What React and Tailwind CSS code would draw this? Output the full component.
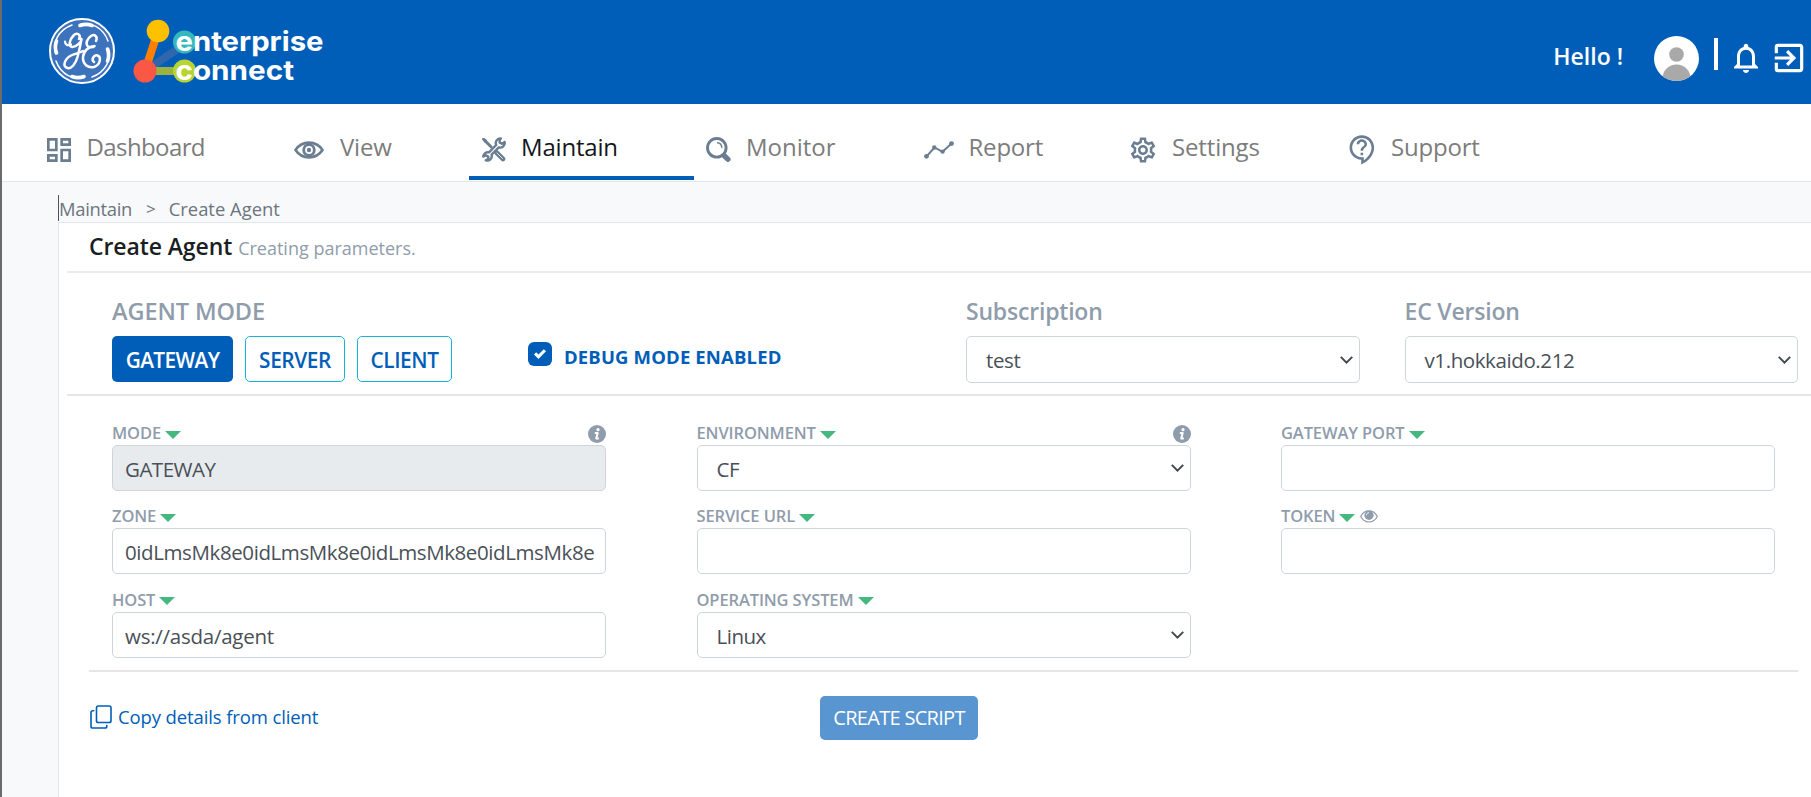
import React from "react";
import {
  MdOutlineDashboard,
  MdOutlineSettings,
  MdOutlineContactSupport,
  MdExitToApp,
  MdNotificationsNone,
} from "react-icons/md";

function GeLogo() {
  return (
    <svg width="68" height="68" viewBox="0 0 68 68" fill="none" stroke="#fff" strokeLinecap="round" strokeLinejoin="round">
      <circle cx="34" cy="34" r="32" fill="#3d73bd" strokeWidth="2" />
      <path d="M32 7.500C42 4.500 55 10 60 24M60.500 32C63.500 42 58 55 44 60M36 60.500C26 63.500 13 58 8 44M7.500 36C4.500 26 10 13 24 8" strokeWidth="1.500" />
      <path d="M32 8.500C36 7 40 7 44 8.500M59.500 32C61 36 61 40 59.500 44M36 59.500C32 61 28 61 24 59.500M8.500 36C7 32 7 28 8.500 24" strokeWidth="3.600" />
      <path d="M31 22C33.500 17.500 29 15 25.500 18.500C21 23 20.500 29.500 24 30C28.500 30.500 34 24 33.500 22C32.500 27 31.500 33 29.500 40C27.500 47 23.500 52 19.500 51C14 49.500 16.500 42 23 38.500C28 36 32 36 35 34" strokeWidth="2.500" />
      <path d="M17 24.500C17 28 20 29 23 27.500" strokeWidth="2.200" />
      <path d="M48 24C50 20 47 16.500 43 19C39 21.500 37.500 26.500 39.500 29C41 31 45 30.500 46.500 29C41 29.500 35.500 33.500 35 40C34.500 47 40 51.500 46 50C52.500 48 53.500 40 49.500 38.500C45.500 37.500 43 43 46 45" strokeWidth="2.500" />
    </svg>
  );
}

function ConnectLogo() {
  return (
    <svg width="196" height="74" viewBox="0 0 196 74">
      <path d="M15 54L58 25" stroke="#2f66ac" strokeWidth="8" />
      <path d="M15 54L28 14" stroke="#ff8000" strokeWidth="8" />
      <path d="M15 54H54" stroke="#9cb23f" strokeWidth="8" />
      <circle cx="28" cy="14" r="11.300" fill="#ffc000" />
      <circle cx="15" cy="54" r="11.500" fill="#fa5745" />
      <circle cx="54.500" cy="25" r="11.500" fill="#35b8bd" />
      <circle cx="54.500" cy="54" r="11.500" fill="#b8d432" />
      <g fill="#fff" fontFamily="Inter, sans-serif" fontWeight="700" fontSize="27.500">
        <text x="45.500" y="33.500" textLength="148" lengthAdjust="spacingAndGlyphs">enterprise</text>
        <text x="45.500" y="62.800" textLength="118.500" lengthAdjust="spacingAndGlyphs">connect</text>
      </g>
    </svg>
  );
}

function EyeIcon() {
  return (
    <svg width="30" height="18" viewBox="0 0 30 18" fill="none" stroke="#6b7d91">
      <path d="M1.500 9C8 -0.800 22 -0.800 28.500 9C22 18.800 8 18.800 1.500 9Z" strokeWidth="2.600" />
      <circle cx="15" cy="9" r="5.300" strokeWidth="2.800" />
      <circle cx="15" cy="9" r="2.200" fill="#6b7d91" stroke="none" />
    </svg>
  );
}

function ToolsIcon() {
  return (
    <svg width="24" height="25" viewBox="0 0 24 25" fill="none" strokeLinecap="round" strokeLinejoin="round">
      <path d="M1.800 2.500L9 9.800" stroke="#6b7d91" strokeWidth="3" />
      <path d="M1 1.500L4.500 3L3 5Z" fill="#6b7d91" stroke="#6b7d91" />
      <path d="M14.500 15.500L21 22" stroke="#6b7d91" strokeWidth="4.600" />
      <path d="M15 16L20.500 21.500" stroke="#fff" strokeWidth="0.800" />
      <path d="M18.800 1.500A4.600 4.600 0 0 0 14.200 8L7 15.400A4.600 4.600 0 0 0 1.200 19.600L3.800 18.300L6.300 19.500L6.100 22L3.800 23.400A4.600 4.600 0 0 0 9.600 17.700L16.800 10.400A4.600 4.600 0 0 0 22.600 5L20 6.700L17.600 5.600L17.700 3.200Z" fill="#fff" stroke="#6b7d91" strokeWidth="2.400" />
    </svg>
  );
}

function MagnifierIcon() {
  return (
    <svg width="25" height="25" viewBox="0 0 25 25" fill="none" stroke="#6b7d91" strokeLinecap="round">
      <circle cx="10.800" cy="10.800" r="9.300" strokeWidth="2.900" />
      <path d="M11.500 5.800C14 6 15.600 8 15.800 10.500" strokeWidth="1.400" />
      <path d="M18.500 19L22 22.300" strokeWidth="5.200" />
    </svg>
  );
}

function TimelineIcon() {
  return (
    <svg width="30" height="18" viewBox="0 0 30 18" fill="#6b7d91">
      <path d="M2.500 15.500L10.500 6.500L18.500 10.800L27.500 2.500" fill="none" stroke="#6b7d91" strokeWidth="1.900" />
      <circle cx="2.500" cy="15.300" r="2.400" />
      <circle cx="10.300" cy="6.500" r="2.200" />
      <circle cx="18.600" cy="10.600" r="2.200" />
      <circle cx="27.500" cy="2.600" r="2.400" />
    </svg>
  );
}

function SmallEye() {
  return (
    <svg width="18" height="13" viewBox="0 0 18 13" fill="none" stroke="#8f9cab" className="ml-[1px]">
      <path d="M0.700 6.500C4.500 -1 13.500 -1 17.300 6.500C13.500 13.800 4.500 13.800 0.700 6.500Z" strokeWidth="1.200" />
      <circle cx="9" cy="5.300" r="4.600" fill="#8f9cab" stroke="none" />
      <path d="M6.400 5.300C6.400 3.800 7.500 2.700 9 2.700" stroke="#fff" strokeWidth="0.900" />
    </svg>
  );
}

function InfoIcon() {
  return (
    <svg width="18" height="18" viewBox="0 0 18 18">
      <circle cx="9" cy="9" r="9" fill="#8f9cab" />
      <circle cx="10" cy="4.700" r="1.600" fill="#fff" />
      <path d="M6.800 8H9.700L8.200 13.600H10.800" fill="none" stroke="#fff" strokeWidth="2" strokeLinejoin="round" />
    </svg>
  );
}

function CopyIcon() {
  return (
    <svg width="22" height="24" viewBox="0 0 22 24" fill="none" stroke="#005eb8" strokeWidth="1.600" strokeLinecap="round">
      <rect x="6.500" y="1" width="14.500" height="16.500" rx="1.800" />
      <path d="M3.700 5.800H2.800Q1 5.800 1 7.600V21.200Q1 23 2.800 23H15Q16.800 23 16.800 21.200V20.500" />
    </svg>
  );
}

function Chevron() {
  return (
    <svg width="13" height="8" viewBox="0 0 13 8" fill="none" stroke="#43484d" strokeWidth="2">
      <path d="M0.800 0.900L6.500 6.600L12.200 0.900" />
    </svg>
  );
}

function Triangle() {
  return (
    <svg width="16" height="8" viewBox="0 0 16 8" className="mt-[3px]">
      <path d="M0 0H16L8 8Z" fill="#45b880" />
    </svg>
  );
}

const navItems = [
  { label: "Dashboard", icon: <MdOutlineDashboard className="h-[32px] w-[32px] -ml-[4px]" />, box: "w-[248px] pl-[44.500px]", text: "ml-[12px] tracking-[-0.6px]" },
  { label: "View", icon: <EyeIcon />, box: "w-[219px] pl-[44px]", text: "ml-[16px] tracking-[-0.2px]" },
  { label: "Maintain", icon: <ToolsIcon />, box: "w-[225px] border-b-4 border-[#005eb8] pl-[13px]", text: "ml-[15px] tracking-[-0.2px]", active: true },
  { label: "Monitor", icon: <MagnifierIcon />, box: "w-[186px] pl-[12px]", text: "ml-[15px]" },
  { label: "Report", icon: <TimelineIcon />, box: "w-[220px] pl-[44px]", text: "ml-[14.500px] tracking-[-0.2px]" },
  { label: "Settings", icon: <MdOutlineSettings className="h-[30px] w-[30px] -ml-[3px]" />, box: "w-[218px] pl-[31px]", text: "ml-[14px] tracking-[-0.150px]" },
  { label: "Support", icon: <MdOutlineContactSupport className="h-[31px] w-[31px] -ml-[4px] -mt-[1px]" />, box: "w-[200px] pl-[33px]", text: "ml-[13px] tracking-[-0.200px]" },
];

function NavItem({ item }) {
  return (
    <div className={"flex h-[76px] shrink-0 items-center " + (item.active ? "pt-[19px] " : "pt-[19px] pb-1 ") + item.box}>
      <span className="text-[#6b7d91]">{item.icon}</span>
      <span className={"-mt-[5px] text-[24px] leading-[32px] " + (item.active ? "font-medium text-[#14171a] " : "text-[#7c7c7c] ") + item.text}>{item.label}</span>
    </div>
  );
}

function Field({ label, value = "", select, info, eye, disabled, spacing = "tracking-[-0.5px]" }) {
  return (
    <div className="h-[83.400px] w-[494px]">
      <div className="flex h-[24px] items-center gap-[4px]">
        <span className="text-[16.500px] font-semibold leading-[24px] tracking-[-0.120px] text-[#8f9cab]">{label}</span>
        <Triangle />
        {eye && <SmallEye />}
        {info && <span className="ml-auto mt-[2px]"><InfoIcon /></span>}
      </div>
      <div className={"flex h-[46px] items-center justify-between rounded-[5px] border border-[#ced4da] pr-[6px] text-[20.500px] leading-[28px] text-[#495057] " + (select ? "pl-[19px] " : "pl-[12px] ") + (disabled ? "bg-[#e7ebee]" : "bg-white")}>
        <span className={"mt-[2px] whitespace-nowrap " + spacing}>{value}</span>
        {select && <Chevron />}
      </div>
    </div>
  );
}

function TopSelect({ label, value }) {
  return (
    <div className="w-[393.500px]">
      <div className="h-[40px] text-[23px] font-semibold leading-[30px] tracking-[-0.2px] text-[#8f9cab]">{label}</div>
      <div className="flex h-[47px] items-center justify-between rounded-[5px] border border-[#ced4da] pl-[19px] pr-[6px] text-[20.500px] leading-[28px] tracking-[-0.4px] text-[#495057]">
        <span className="mt-[1px]">{value}</span>
        <Chevron />
      </div>
    </div>
  );
}

export default function App() {
  return (
    <div className="flex h-[797px] w-full flex-col overflow-hidden border-l-2 border-[#6b6b6b] bg-[#f8f9fb] font-['Open_Sans','Noto_Sans',sans-serif]">
      <header className="flex h-[104px] shrink-0 items-start bg-[#005eb8] text-white">
        <div className="ml-[45.500px] mt-[17px]"><GeLogo /></div>
        <div className="ml-[14.500px] mt-[17px]"><ConnectLogo /></div>
        <div className="ml-auto flex pr-[3px]">
          <span className="mt-[39.500px] text-[23px] font-semibold leading-[32px]">Hello !</span>
          <svg width="45" height="45" viewBox="0 0 45 45" className="ml-[31px] mt-[36px]">
            <clipPath id="avatar"><circle cx="22.500" cy="22.500" r="22.500" /></clipPath>
            <g clipPath="url(#avatar)">
              <rect width="45" height="45" fill="#fff" />
              <circle cx="22.500" cy="18.500" r="7.300" fill="#a9a9a9" />
              <circle cx="22.500" cy="42.500" r="14" fill="#a9a9a9" />
            </g>
          </svg>
          <span className="ml-[15px] mt-[38px] h-[32px] w-[4px] bg-white" />
          <MdNotificationsNone className="ml-[10px] mt-[40px] h-[36px] w-[36px]" />
          <MdExitToApp className="ml-[6px] mt-[39px] h-[38px] w-[38px]" />
        </div>
      </header>

      <nav className="flex h-[78px] shrink-0 border-b border-[#e4e7ea] bg-white">
        {navItems.map((item) => <NavItem key={item.label} item={item} />)}
      </nav>

      <div className="ml-[56px] flex h-[40px] shrink-0 items-start pt-[13px] text-[18.400px] leading-[28px] text-[#6c757d]">
        <span className="h-[26px] border-l border-[#4b5563] tracking-[-0.3px]">Maintain</span>
        <span className="ml-[14px] text-[17px]">&gt;</span>
        <span className="ml-[13px]">Create Agent</span>
      </div>

      <main className="ml-[56px] flex-1 border-l border-t border-[#e4e7ea] bg-white">
        <div className="ml-[8px] flex h-[50px] items-baseline border-b-2 border-[#e9ebed] pl-[22px] pt-[6px]">
          <h1 className="text-[23px] font-semibold leading-[34px] tracking-[-0.100px] text-[#1b1e22]">Create Agent</h1>
          <span className="ml-[6px] text-[18px] text-[#8f9cab]">Creating parameters.</span>
        </div>

        <section className="ml-[8px] flex h-[123px] border-b-2 border-[#e4e6e8] pl-[45px] pt-[23px]">
          <div className="w-[416px]">
            <div className="h-[40px] text-[23.500px] font-semibold leading-[30px] tracking-[-0.100px] text-[#8f9cab]">AGENT MODE</div>
            <div className="flex gap-[12px] text-[20.800px] leading-[28px] tracking-[-0.4px]">
              <button className="h-[46px] w-[121px] rounded-[5px] bg-[#005eb8] pt-[2px] font-semibold tracking-[-0.6px] text-white">GATEWAY</button>
              <button className="h-[46px] w-[100px] rounded-[5px] border border-[#17b1de] pt-[1px] font-semibold text-[#005eb8]">SERVER</button>
              <button className="h-[46px] w-[95px] rounded-[5px] border border-[#17b1de] pt-[1px] font-semibold text-[#005eb8]">CLIENT</button>
            </div>
          </div>
          <div className="flex w-[438px] pt-[46px]">
            <span className="flex h-[24px] w-[24px] items-center justify-center rounded-[6px] bg-[#005eb8]">
              <svg width="12" height="12" viewBox="0 0 8 8"><path fill="#fff" d="M6.564.75l-3.590 3.612-1.538-1.550L0 4.260 2.974 7.250 8 2.193z" /></svg>
            </span>
            <span className="ml-[12px] mt-[1px] text-[18.500px] font-bold leading-[28px] tracking-[0.150px] text-[#005eb8]">DEBUG MODE ENABLED</span>
          </div>
          <div className="flex gap-[45px]">
            <TopSelect label="Subscription" value="test" />
            <TopSelect label="EC Version" value="v1.hokkaido.212" />
          </div>
        </section>

        <section className="grid h-[274px] w-[1700px] grid-cols-[494px_494px_494px] content-start gap-x-[90.500px] pl-[53px] pt-[25px]">
          <Field label="MODE" value="GATEWAY" info disabled />
          <Field label="ENVIRONMENT" value="CF" select info />
          <Field label="GATEWAY PORT" />
          <Field label="ZONE" value="0idLmsMk8e0idLmsMk8e0idLmsMk8e0idLmsMk8e" spacing="tracking-[-0.400px]" />
          <Field label="SERVICE URL" />
          <Field label="TOKEN" eye />
          <Field label="HOST" value="ws://asda/agent" spacing="tracking-[-0.250px]" />
          <Field label="OPERATING SYSTEM" value="Linux" select />
        </section>

        <footer className="ml-[30px] mr-[13px] flex border-t-2 border-[#e4e6e8]">
          <a className="mt-[33px] flex h-[24px] w-[731px] items-center pl-[1px] text-[#005eb8]">
            <CopyIcon />
            <span className="ml-[6px] text-[18.500px] leading-[24px] tracking-[-0.120px]">Copy details from client</span>
          </a>
          <button className="mt-[24px] h-[44px] w-[158px] rounded-[5px] bg-[#5995d0] text-[20px] font-medium leading-[28px] tracking-[-0.7px] text-white">CREATE SCRIPT</button>
        </footer>
      </main>
    </div>
  );
}
